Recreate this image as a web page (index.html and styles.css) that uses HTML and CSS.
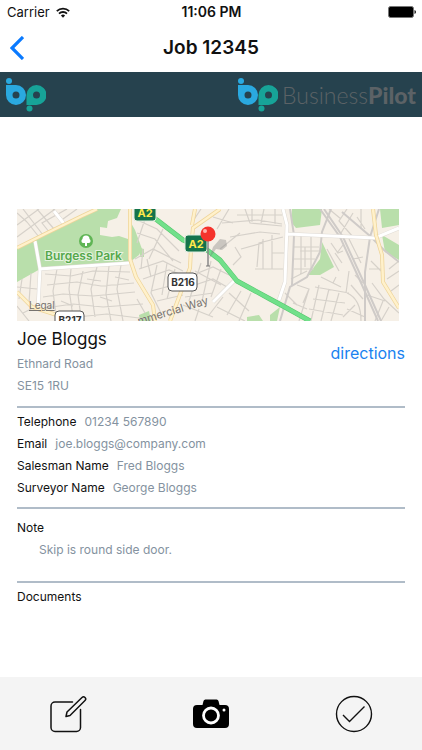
FILE: index.html
```html
<!DOCTYPE html>
<html lang="en">
<head>
<meta charset="UTF-8">
<meta name="viewport" content="width=device-width, initial-scale=1.0">
<link rel="stylesheet" href="styles.css">
<title>Job 12345</title>
</head>
<body>
<div class="status-bar">
    <div class="carrier">
        <span>Carrier</span>
        <svg width="14" height="11" viewBox="0 0 14 11" fill="none" stroke="#111" stroke-width="1.8">
            <path d="M0.8 4.2a9 9 0 0 1 12.4 0M3 6.6a5.8 5.8 0 0 1 8 0"/>
            <path d="M7 10.8L4.9 8.6a3 3 0 0 1 4.2 0z" fill="#111" stroke="none"/>
        </svg>
    </div>
    <span class="time">11:06 PM</span>
    <div class="battery">
        <svg width="28" height="12" viewBox="0 0 28 12">
            <rect x="0.5" y="0.5" width="25" height="11" rx="2" fill="#000" stroke="#777"/>
            <path d="M26.5 4v4q1.5-.6 1.5-2t-1.5-2z" fill="#111"/>
        </svg>
    </div>
</div>
<header class="nav-bar">
    <button class="back-btn" aria-label="Back">
        <svg width="14" height="24" viewBox="0 0 14 24" fill="none" stroke="#0a7aff" stroke-width="3.2">
            <path d="M13 1L2 12l11 11"/>
        </svg>
    </button>
    <h1>Job 12345</h1>
</header>
<div class="brand-bar">
    <svg width="40" height="34" viewBox="0 0 40 34">
        <g id="bp">
            <circle cx="3" cy="3" r="3" fill="#2aa9e0"/>
            <path d="M0 7h10a10 10 0 1 1-10 10zM10 13.500a3.500 3.500 0 1 0 0 7 3.500 3.500 0 0 0 0-7z" fill="#2aa9e0" fill-rule="evenodd"/>
            <path d="M20.500 27V17a10 10 0 1 1 10 10zM30.500 13.500a3.500 3.500 0 1 0 0 7 3.500 3.500 0 0 0 0-7z" fill="#17a398" fill-rule="evenodd"/>
            <circle cx="23.500" cy="30.500" r="3" fill="#17a398"/>
        </g>
    </svg>
    <div class="brand-name">
        <svg width="40" height="34" viewBox="0 0 40 34"><use href="#bp"/></svg>
        <span class="brand-text">Business<b>Pilot</b></span>
    </div>
</div>
<main class="container">
    <svg class="map" viewBox="0 0 382 112" preserveAspectRatio="xMidYMid slice" role="img" aria-label="Map of Ethnard Road">
        <rect width="382" height="112" fill="#f6f0e7"/>
        <!-- parks -->
        <g fill="#b9dfab">
            <path d="M0 39L30 24 65 7 80 0h33v54L25 59 0 73z"/>
            <path d="M113 12l5 9 7 19-3 6-9 7z"/>
            <path d="M275 0h30l-2 16-24 3-5-6zM363 0h19v16l-17 3zM365 26l17 10v15l-14-8zM305 33l12 25-14 8h-12l12-16zM253 106l10-8-3 14h-7zM123 39l4 1v8h-4zM122 106l10-4 2 10h-11zM230 108l12-2 4 6h-16z"/>
        </g>
        <path d="M83 18l7 1 1-7 9-3 4-9h7v30l-9-3-7 1-12-2z" fill="#f6f0e7"/>
        <!-- small streets -->
        <g fill="none" stroke="#d6d1ca" stroke-width="1.200">
            <path d="M0 16L22 0M0 28L38 0M6 0l20 26M20 0l17 20M36 0l12 15M50 0l-25 14 8 10M10 13l12 15M0 4l10 9M60 0L46 10"/>
            <path d="M28 65l26 2 22-5 37 1M30 76l30-3 24 4 33-3M26 88l20-3 30 2 42-4M28 99l28-4 30 3 40-3M60 108l30-3 40 5M40 60l-4 22 3 24M54 60l-2 20 4 28M66 62l-5 24 3 22M80 58l-6 22 4 28M92 57l-3 28 5 27M104 56l-4 24 6 32M70 70l14 2M83 88l12 4M98 68l14 3M44 92l12 5"/>
            <path d="M0 78l20 2M5 70l-3 20M14 64l-2 30M0 97l12 15M22 80v18M6 104l16-8"/>
            <path d="M118 10l22 10 22 22M120 24l18 6 18 22M130 4l-10 30M146 20l-14 30M118 50l18-10 28 14M122 60l24-8 20 10M126 70l26-9 18 7M134 82l30-8M140 92l26-6M140 56l-6 28 10 20M150 54l-5 32M158 60l-8 30M126 40l-2 20M130 50l4 18M120 90l8 14"/>
            <path d="M176 66l20-8 16 8M172 78l24-8 14 8M168 88l28-4M184 54l-12 38M194 52l-9 40M204 60l-10 28M178 62l26 14M166 96l30 12M182 100l-4 12M200 98l28 14M212 84l20 18M224 82l-14 24M234 84l-12 28M192 106l14-18"/>
            <path d="M184 0l-8 12M196 8l20 6M212 0l-12 20M228 0l5 14 32 3M205 14l36-3 24 4M235 0v13M247 0l-3 14M258 0v15M220 6h45M213 28l30-5 20 2M218 38l6 10-8 8M224 40l22-6M240 58l2-24 24-6M246 60V30M255 60V26M238 60h28M255 44h12M203 40l20-16"/>
            <path d="M276 38h26M276 50h22M277 60h20M284 26v40M294 26v36M303 42h-20M274 70l16-8M288 38v20M314 34l7 10 5-2M318 44l7 10M310 40l12 22M326 36l-6 8M312 0l12 10M330 0l-8 12 14 16M336 4l-12 20M344 0v20M340 8l8 12M332 30l12 24M336 50l10-2"/>
            <path d="M280 76l12 4-6 14M292 80l-10 32M298 78l34 6M296 90l32 4M292 100l34 6M302 76l-8 36M312 80l-8 32M322 84l-8 28M304 68l12 6 3-6M316 74l8 4M330 84q14 6 14 28M334 76l12 14M338 66l8 8M332 62l-3 22M330 100l18 8M326 108l12-12M352 60h14M354 52l10 10M372 60l10-8M370 70l12-8M374 82l8-6M355 74l12 16 15 14M350 86l18 6M366 92l-8 20M372 98l-8 14M276 94l14 6M268 84l12 12"/>
        </g>
        <!-- railways -->
        <g fill="none" stroke="#cfcbc8" stroke-width="2">
            <path d="M303 0l20 28 22 48 16 36M307 0l19 28 22 48 16 36M325 3l28 24 14 14 15 12M362 0l-9 28-5 35v49M273 0l4 26-2 50"/>
            <path d="M314 0l-9 23-2 20-13 25-17 10-10 34"/>
        </g>
        <!-- white roads -->
        <g fill="none" stroke="#dedad4" stroke-width="4">
            <path d="M18 32l5 28-2 40M22 60l91-6M220 69l-24 24M266 0l4 16-2 57-6 18M271 25l87 4 24-10M37 2l11 14"/>
        </g>
        <g fill="none" stroke="#fff" stroke-width="3">
            <path d="M18 32l5 28-2 40M22 60l91-6M220 69l-24 24M266 0l4 16-2 57-6 18M271 25l87 4 24-10M37 2l11 14"/>
        </g>
        <!-- B roads -->
        <g fill="none" stroke="#eed49a" stroke-width="4" stroke-linejoin="round">
            <path d="M0 39l30-15L65 7 80 0M113 0v50l6 18 17 28 2 16M0 83l15 15 25 8M203 0l-27 19-2 20-1 20-20 53M178 0l-3 16M356 0l3 26 6 20 1 27 16 26"/>
        </g>
        <g fill="none" stroke="#fff1cb" stroke-width="2.500" stroke-linejoin="round">
            <path d="M0 39l30-15L65 7 80 0M113 0v50l6 18 17 28 2 16M0 83l15 15 25 8M203 0l-27 19-2 20-1 20-20 53M178 0l-3 16M356 0l3 26 6 20 1 27 16 26"/>
        </g>
        <!-- A2 -->
        <path d="M128 3l12 8 26 20 24 10 13 10 17 21 33 18 13 7 27 15" fill="none" stroke="#55c46c" stroke-width="5" stroke-linejoin="round"/>
        <path d="M128 3l12 8 26 20 24 10 13 10 17 21 33 18 13 7 27 15" fill="none" stroke="#71e08a" stroke-width="4" stroke-linejoin="round"/>
        <!-- labels -->
        <circle cx="69" cy="32" r="7" fill="#5fb554"/>
        <path d="M68 37v-3h-2a2.200 2.200 0 0 1-.5-4 3.500 3.500 0 0 1 7 0 2.200 2.200 0 0 1-.5 4h-2v3z" fill="#fff"/>
        <text class="park-label" x="28" y="51">Burgess Park</text>
        <text class="street-label" x="122" y="116" transform="rotate(-17 122 116)">mmercial Way</text>
        <text class="legal-label" x="12" y="100">Legal</text>
        <g class="a-road">
            <rect x="117" y="-5" width="22" height="17" rx="3"/>
            <text x="128" y="8">A2</text>
            <rect x="168" y="26" width="22" height="17" rx="3"/>
            <text x="179" y="39">A2</text>
        </g>
        <g class="b-road">
            <rect x="151" y="64" width="29" height="18" rx="4"/>
            <text x="166" y="77">B216</text>
            <rect x="38" y="102" width="29" height="18" rx="4"/>
            <text x="53" y="115">B217</text>
        </g>
        <!-- pin -->
        <path d="M192 50l4-12 7-8 6 1 1 6-5 4-6-1z" fill="#777" opacity=".35"/>
        <path d="M191 30v27" stroke="#888" stroke-width="1.500"/>
        <path d="M189 57h4" stroke="#777"/>
        <circle cx="191" cy="25" r="7.500" fill="#f5332c"/>
        <circle cx="188" cy="22" r="2" fill="#ffb5ae"/>
    </svg>
    <section class="customer">
        <div>
            <h2>Joe Bloggs</h2>
            <p>Ethnard Road</p>
            <p>SE15 1RU</p>
        </div>
        <a class="directions" href="#directions">directions</a>
    </section>
    <dl class="contact">
        <div class="row"><dt>Telephone</dt><dd>01234 567890</dd></div>
        <div class="row"><dt>Email</dt><dd>joe.bloggs@company.com</dd></div>
        <div class="row"><dt>Salesman Name</dt><dd>Fred Bloggs</dd></div>
        <div class="row"><dt>Surveyor Name</dt><dd>George Bloggs</dd></div>
    </dl>
    <section class="note">
        <h3>Note</h3>
        <p>Skip is round side door.</p>
    </section>
    <section class="documents">
        <h3>Documents</h3>
    </section>
</main>
<footer class="toolbar">
    <button aria-label="Edit">
        <svg width="38" height="38" viewBox="0 0 38 38" fill="none" stroke="#111" stroke-width="1.500" stroke-linecap="round" stroke-linejoin="round">
            <path d="M23.500 7H6a4 4 0 0 0-4 4v21.500a4 4 0 0 0 4 4h21.500a4 4 0 0 0 4-4V14.500"/>
            <path d="M17 21.500l1-4.500L33 2.500a2 2 0 0 1 3 3L21 20.500z"/>
        </svg>
    </button>
    <button aria-label="Take photo">
        <svg width="38" height="38" viewBox="0 0 38 38">
            <path d="M5 10h5.500l1-4a2 2 0 0 1 2-1.500h11a2 2 0 0 1 2 1.500l1 4H33a4 4 0 0 1 4 4v15a4 4 0 0 1-4 4H5a4 4 0 0 1-4-4V14a4 4 0 0 1 4-4z"/>
            <circle cx="19" cy="20.500" r="7.500" fill="none" stroke="#fff" stroke-width="2.800"/>
            <circle cx="32" cy="15" r="1.500" fill="#fff"/>
        </svg>
    </button>
    <button aria-label="Complete">
        <svg width="38" height="38" viewBox="0 0 38 38" fill="none" stroke="#111" stroke-width="1.400">
            <circle cx="19" cy="19" r="17.500"/>
            <path d="M8 20l6.500 6.500L29.500 11.500"/>
        </svg>
    </button>
</footer>
</body>
</html>
```

FILE: styles.css
```css
* {
    box-sizing: border-box;
}

body {
    font-family: Inter, "Liberation Sans", sans-serif;
    font-size: 12px;
    line-height: 22px;
    margin: 0;
    min-height: 100vh;
    display: flex;
    flex-direction: column;
    background-color: #ffffff;
    color: #111;
}

h1, h2, h3, p, dl, dd {
    margin: 0;
}

button {
    padding: 0;
    border: none;
    background: none;
    cursor: pointer;
}

svg {
    display: block;
}

.status-bar {
    display: grid;
    grid-template-columns: 1fr auto 1fr;
    align-items: center;
    height: 24px;
    padding: 0 6px 0 7px;
    font-size: 13px;
}

.carrier {
    display: flex;
    align-items: center;
    gap: 6px;
}

.time {
    font-size: 14px;
    font-weight: 600;
}

.battery {
    justify-self: end;
}

.nav-bar {
    display: grid;
    grid-template-columns: 1fr auto 1fr;
    align-items: center;
    height: 48px;
    padding: 0 10px;
}

.back-btn {
    justify-self: start;
}

h1 {
    font-size: 19px;
    font-weight: 600;
}

.brand-bar {
    display: flex;
    justify-content: space-between;
    align-items: center;
    height: 45px;
    padding: 0 6px;
    background-color: #26424e;
}

.brand-name {
    display: flex;
    align-items: center;
    gap: 4px;
}

.brand-text {
    font-family: Lato, sans-serif;
    font-size: 23px;
    font-weight: 300;
    color: #5c6266;
}

.brand-text b {
    font-weight: 900;
}

.container {
    flex: 1;
    padding: 92px 17px 24px;
}

.map {
    width: calc(100% - 6px);
}

.park-label {
    font-size: 12px;
    font-weight: 600;
    fill: #55a84c;
    stroke: #e6f3df;
    stroke-width: 2px;
    paint-order: stroke;
}

.street-label {
    font-size: 11px;
    fill: #77736e;
}

.legal-label {
    font-size: 10px;
    fill: #77736e;
    text-decoration: underline;
}

.a-road text,
.b-road text {
    font-size: 11px;
    font-weight: 700;
    text-anchor: middle;
}

.a-road rect {
    fill: #14734b;
    stroke: #dfeee0;
}

.a-road text {
    fill: #ffe94a;
}

.b-road rect {
    fill: #ffffff;
    stroke: #555;
}

.b-road text {
    font-size: 10px;
    fill: #333;
}

.customer {
    display: flex;
    justify-content: space-between;
    align-items: flex-start;
    padding: 4px 0 9px;
}

h2 {
    font-size: 17px;
    font-weight: 400;
    line-height: 28px;
}

p, dd {
    color: #8492a0;
}

.directions {
    padding-top: 17px;
    font-size: 16px;
    color: #1a82f0;
    text-decoration: none;
}

.contact,
.note,
.documents {
    border-top: 2px solid #b0bcc8;
    padding-top: 3px;
}

.contact {
    padding-bottom: 8px;
}

.row {
    display: flex;
    gap: 8px;
}

h3 {
    font-size: 12px;
    font-weight: 400;
}

.note {
    padding-top: 8px;
    padding-bottom: 20px;
}

.note p {
    padding-left: 22px;
}

.toolbar {
    display: flex;
    justify-content: space-between;
    align-items: center;
    height: 73px;
    padding: 0 49px;
    background-color: #f4f4f4;
}
```
